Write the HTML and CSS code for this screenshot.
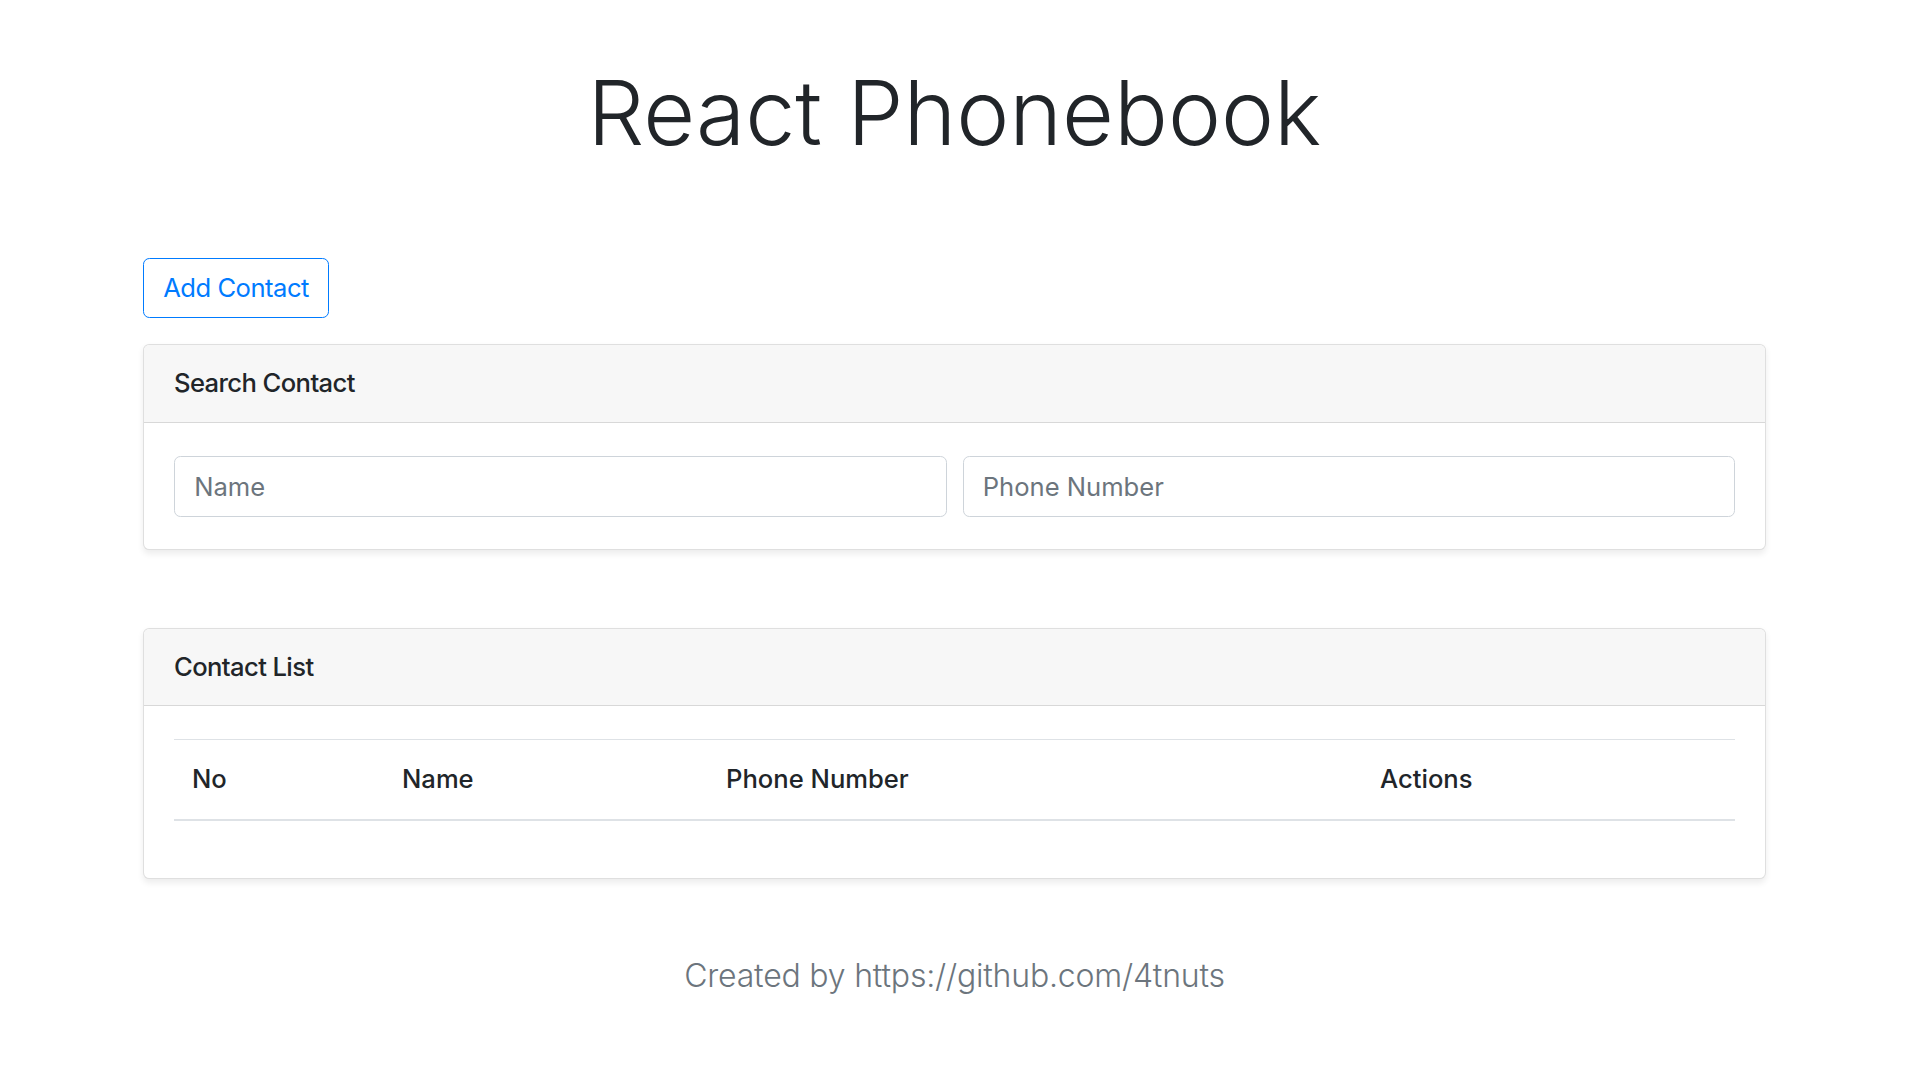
FILE: index.html
```html
<!DOCTYPE html>
<html lang="en">
<head>
<meta charset="utf-8">
<title>React Phonebook</title>
<link rel="stylesheet" href="styles.css">
</head>
<body>
<div class="page">
  <h1 class="title">React Phonebook</h1>
  <button class="btn-outline" type="button">Add Contact</button>
  <section class="card card-search">
    <div class="card-header">Search Contact</div>
    <div class="card-body">
      <div class="form-row">
        <input class="form-control" type="text" placeholder="Name">
        <input class="form-control" type="text" placeholder="Phone Number">
      </div>
    </div>
  </section>
  <section class="card card-list">
    <div class="card-header">Contact List</div>
    <div class="card-body">
      <table class="table">
        <thead>
          <tr>
            <th class="col-no">No</th>
            <th class="col-name">Name</th>
            <th class="col-phone">Phone Number</th>
            <th class="col-actions">Actions</th>
          </tr>
        </thead>
        <tbody></tbody>
      </table>
    </div>
  </section>
  <p class="footer">Created by https://github.com/4tnuts</p>
</div>
</body>
</html>
```

FILE: styles.css
```css
* { box-sizing: border-box; }
html, body { margin: 0; padding: 0; background: #fff; }
body {
  font-family: "Inter", "Liberation Sans", sans-serif;
  font-size: 25.6px;
  line-height: 1.5;
  color: #212529;
}
.page {
  padding: 0 154px 0 143px;
  display: flex;
  flex-direction: column;
  align-items: stretch;
}
.title {
  font-size: 89.6px;
  font-weight: 300;
  line-height: 1.2;
  margin: 59px 0 91px;
  text-align: center;
  color: #212529;
}
.btn-outline {
  align-self: flex-start;
  font-family: inherit;
  font-size: 25.6px;
  line-height: 38.4px;
  padding: 10px 19.2px;
  letter-spacing: -0.5px;
  color: #007bff;
  background: #fff;
  border: 1px solid #007bff;
  border-radius: 6.4px;
  margin-bottom: 26px;
  font-weight: 400;
}
.card {
  border: 1px solid rgba(0,0,0,.125);
  border-radius: 6.4px;
  box-shadow: 0 3.2px 6.4px rgba(0,0,0,.075);
  background: #fff;
  overflow: hidden;
}
.card-search { margin-bottom: 78px; }
.card-header {
  padding: 19.2px 30px;
  line-height: 38.4px;
  background: #f7f7f7;
  border-bottom: 1px solid rgba(0,0,0,.125);
  font-weight: 500;
  letter-spacing: -0.6px;
}
.card-body { padding: 33px 30px 32px; }
.form-row { display: flex; gap: 16px; }
.form-control {
  flex: 1 1 0;
  min-width: 0;
  height: 61px;
  padding: 9.6px 19.2px;
  font-family: inherit;
  font-size: 25.6px;
  color: #495057;
  border: 1px solid #ced4da;
  border-radius: 6.4px;
  background: #fff;
}
.form-control::placeholder { color: #6c757d; opacity: 1; }
.table {
  width: 100%;
  border-collapse: collapse;
  margin-bottom: 25.6px;
  table-layout: fixed;
}
.table th {
  text-align: left;
  font-weight: 500;
  padding: 20px 18px;
  line-height: 38.4px;
  border-top: 1px solid #dee2e6;
  border-bottom: 2px solid #dee2e6;
}
.col-no { width: 210px; }
.col-name { width: 324px; }
.col-phone { width: 654px; }
.col-actions { width: auto; }
.footer {
  margin: 73px 0 0;
  text-align: center;
  font-size: 32px;
  font-weight: 300;
  line-height: 48px;
  letter-spacing: -0.2px;
  color: #6c757d;
}
```
